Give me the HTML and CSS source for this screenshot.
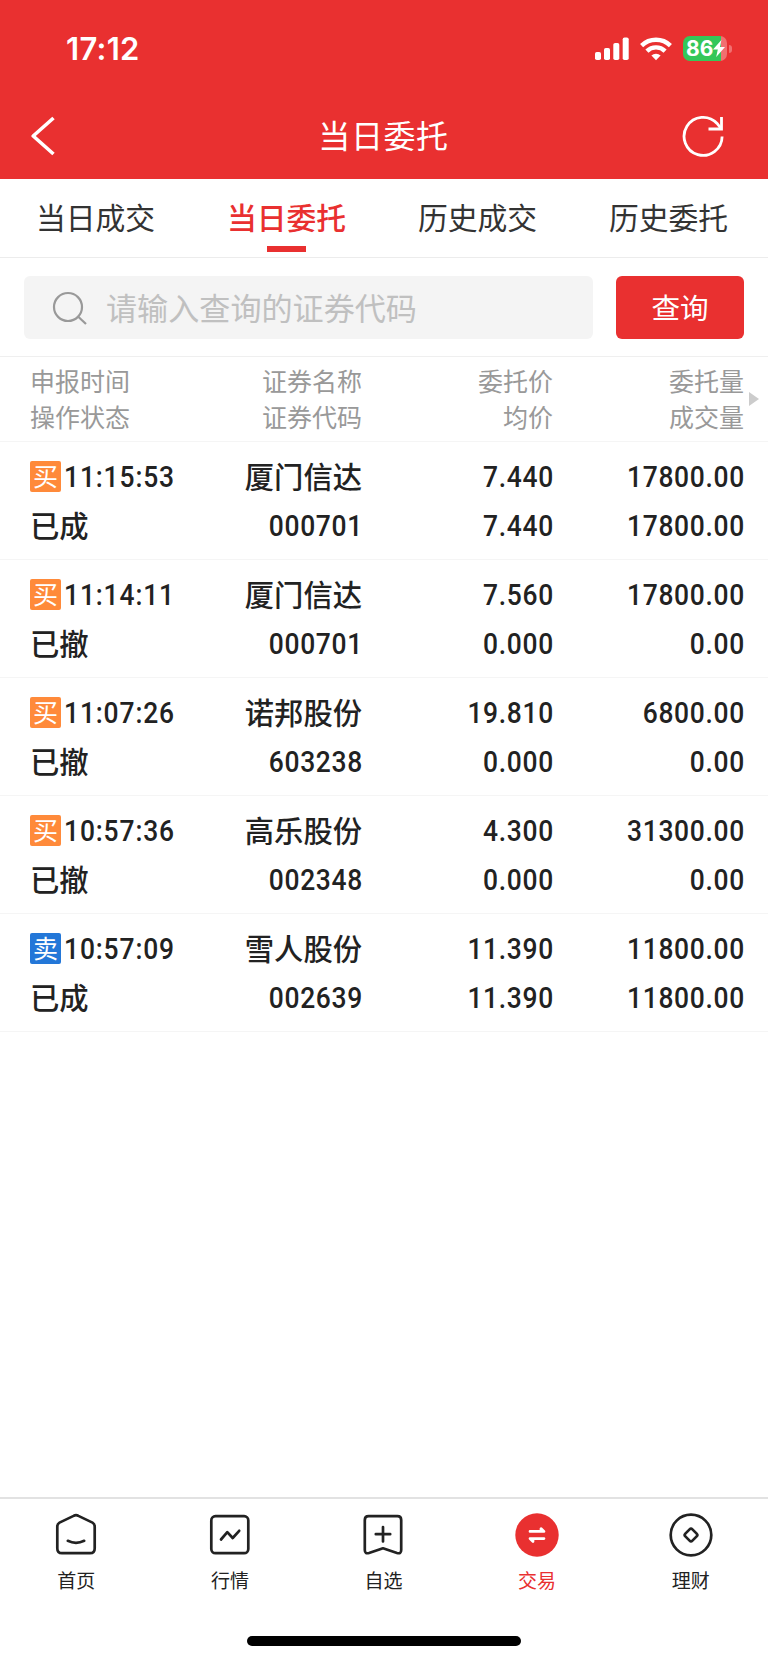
FILE: index.html
```html
<!DOCTYPE html>
<html lang="zh-CN">
<head>
<meta charset="utf-8">
<title>当日委托</title>
<link rel="stylesheet" href="styles.css">
</head>
<body>
<div class="page">
  <div class="header">
    <div class="status">
      <span class="clock">17:12</span>
      <div class="status-icons">
        <svg class="signal" width="34" height="24" viewBox="0 0 34 24" fill="#fff">
          <rect x="0" y="15" width="6" height="8" rx="1.8"/>
          <rect x="9" y="11" width="6" height="12" rx="1.8"/>
          <rect x="18.3" y="6" width="6" height="17" rx="1.8"/>
          <rect x="27.7" y="0.5" width="6" height="22.5" rx="1.8"/>
        </svg>
        <svg class="wifi" width="32" height="24" viewBox="0 0 32 24">
          <g fill="none" stroke="#fff" stroke-width="4.4">
            <path d="M1.6 8.6 A20.6 20.6 0 0 1 30.4 8.6"/>
            <path d="M6.9 14.1 A13 13 0 0 1 25.1 14.1"/>
          </g>
          <path d="M11.4 18.6 A6.6 6.6 0 0 1 20.6 18.6 L16 23.2 Z" fill="#fff"/>
        </svg>
        <div class="battery">
          <span>86</span>
          <svg width="12" height="17" viewBox="0 0 12 17" fill="#fff"><path d="M8.4 0 L0 9.6 H4.8 L3.2 17 L12 7 H7 Z"/></svg>
        </div>
        <div class="battery-cap"></div>
      </div>
    </div>
    <div class="nav">
      <svg width="24" height="40" viewBox="0 0 24 40" fill="none" stroke="#fff" stroke-width="3.6"><path d="M22.5 2 L2.2 20 L22.5 38" stroke-linejoin="round"/></svg>
      <h1>当日委托</h1>
      <svg width="42" height="42" viewBox="0 0 42 42" fill="none" stroke="#fff" stroke-width="2.8">
        <path d="M40.1 21.5 A19 19 0 1 1 35.1 8.5 L38.6 13"/>
        <path d="M39.5 2 V14 H26.5"/>
      </svg>
    </div>
  </div>

  <div class="tabs">
    <div class="tab">当日成交</div>
    <div class="tab active">当日委托</div>
    <div class="tab">历史成交</div>
    <div class="tab">历史委托</div>
  </div>

  <div class="search">
    <div class="search-box">
      <svg width="36" height="36" viewBox="0 0 36 36" fill="none" stroke="#999" stroke-width="2.2"><circle cx="16" cy="17" r="14"/><path d="M26 26.5 L34 34"/></svg>
      <span>请输入查询的证券代码</span>
    </div>
    <button class="search-btn">查询</button>
  </div>

  <div class="row thead">
    <div><p>申报时间</p><p>操作状态</p></div>
    <div><p>证券名称</p><p>证券代码</p></div>
    <div><p>委托价</p><p>均价</p></div>
    <div><p>委托量</p><p>成交量</p></div>
    <i class="more"></i>
  </div>

  <div class="row">
    <div><p><b class="tag buy">买</b><span class="num">11:15:53</span></p><p>已成</p></div>
    <div><p>厦门信达</p><p class="num">000701</p></div>
    <div><p class="num">7.440</p><p class="num">7.440</p></div>
    <div><p class="num">17800.00</p><p class="num">17800.00</p></div>
  </div>
  <div class="row">
    <div><p><b class="tag buy">买</b><span class="num">11:14:11</span></p><p>已撤</p></div>
    <div><p>厦门信达</p><p class="num">000701</p></div>
    <div><p class="num">7.560</p><p class="num">0.000</p></div>
    <div><p class="num">17800.00</p><p class="num">0.00</p></div>
  </div>
  <div class="row">
    <div><p><b class="tag buy">买</b><span class="num">11:07:26</span></p><p>已撤</p></div>
    <div><p>诺邦股份</p><p class="num">603238</p></div>
    <div><p class="num">19.810</p><p class="num">0.000</p></div>
    <div><p class="num">6800.00</p><p class="num">0.00</p></div>
  </div>
  <div class="row">
    <div><p><b class="tag buy">买</b><span class="num">10:57:36</span></p><p>已撤</p></div>
    <div><p>高乐股份</p><p class="num">002348</p></div>
    <div><p class="num">4.300</p><p class="num">0.000</p></div>
    <div><p class="num">31300.00</p><p class="num">0.00</p></div>
  </div>
  <div class="row">
    <div><p><b class="tag sell">卖</b><span class="num">10:57:09</span></p><p>已成</p></div>
    <div><p>雪人股份</p><p class="num">002639</p></div>
    <div><p class="num">11.390</p><p class="num">11.390</p></div>
    <div><p class="num">11800.00</p><p class="num">11800.00</p></div>
  </div>

  <div class="tabbar">
    <div class="item">
      <svg width="46" height="46" viewBox="0 0 46 46"><path d="M20.6 3.9 Q23 2.2 25.4 3.9 L39.5 10.6 Q41.7 11.8 41.7 14.4 V36.5 Q41.7 41.2 37 41.2 H9 Q4.3 41.2 4.3 36.5 V14.4 Q4.3 11.8 6.5 10.6 Z"/><path d="M14.8 28.8 Q23 32.8 31.2 28.8"/></svg>
      <span>首页</span>
    </div>
    <div class="item">
      <svg width="46" height="46" viewBox="0 0 46 46"><rect x="4.3" y="4.2" width="37" height="37" rx="4.2"/><path d="M14 27.5 L20.3 20.2 L25.7 26 L32.2 18.8"/></svg>
      <span>行情</span>
    </div>
    <div class="item">
      <svg width="46" height="46" viewBox="0 0 46 46"><path d="M8.6 4.2 H37.4 Q41.2 4.2 41.2 8 V38 Q41.2 42.2 37 41 L23 36.3 L9 41 Q4.8 42.2 4.8 38 V8 Q4.8 4.2 8.6 4.2 Z"/><path d="M23 15 V29.4 M15.8 22.2 H30.2"/></svg>
      <span>自选</span>
    </div>
    <div class="item on">
      <svg width="46" height="46" viewBox="0 0 46 46"><circle class="fill" cx="23" cy="23" r="21.7"/><path class="white" d="M16 19.4 H30 L27 16.6 V19 M30 26.6 H16 L19 29.6 V27"/></svg>
      <span>交易</span>
    </div>
    <div class="item">
      <svg width="46" height="46" viewBox="0 0 46 46"><circle cx="23" cy="23" r="20.3"/><rect x="18" y="18" width="10" height="10" rx="2" transform="rotate(45 23 23)"/></svg>
      <span>理财</span>
    </div>
  </div>
  <div class="home-bar"></div>
</div>
</body>
</html>
```

FILE: styles.css
```css
body {
  margin: 0;
  background: #fff;
  color: #222;
  font-family: "Noto Sans CJK SC", sans-serif;
}

p, h1 {
  margin: 0;
}

svg {
  display: block;
}

.page {
  display: flex;
  flex-direction: column;
  width: 768px;
  height: 1663px;
}

.header {
  height: 179px;
  background: #e93030;
  color: #fff;
}

.status {
  display: flex;
  justify-content: space-between;
  align-items: center;
  height: 97px;
  padding: 0 36px 0 66px;
}

.clock {
  font: 600 31px/36px Inter, sans-serif;
  letter-spacing: 0.3px;
  padding-top: 1px;
}

.status-icons {
  display: flex;
  align-items: center;
}

.wifi {
  margin: 0 11px 0 11px;
}

.battery {
  display: flex;
  align-items: center;
  width: 44px;
  height: 25px;
  padding-left: 3px;
  box-sizing: border-box;
  border-radius: 7px;
  background: linear-gradient(90deg, #34c759 86%, #f17070 86%);
  font: 700 21px/25px Inter, sans-serif;
}

.battery-cap {
  width: 3px;
  height: 8px;
  margin-left: 2px;
  border-radius: 0 4px 4px 0;
  background: #f17070;
}

.nav {
  display: grid;
  grid-template-columns: 42px 1fr 42px;
  align-items: center;
  height: 78px;
  padding: 0 44px 0 31px;
}

.nav h1 {
  padding: 0 0 4px 12px;
  font-size: 32px;
  font-weight: 400;
  line-height: 48px;
  letter-spacing: 0.6px;
  text-align: center;
}

.tabs {
  display: flex;
  height: 79px;
  border-bottom: 1px solid #ececec;
  box-sizing: border-box;
}

.tab {
  display: flex;
  flex-direction: column;
  align-items: center;
  width: 191px;
  padding-top: 15px;
  font-size: 29.8px;
  line-height: 44px;
  color: #333;
}

.tab.active {
  color: #e93030;
  font-weight: 500;
}

.tab.active::after {
  content: "";
  width: 39px;
  height: 6px;
  margin-top: 8px;
  background: #e93030;
}

.search {
  display: flex;
  justify-content: space-between;
  height: 63px;
  padding: 18px 24px 17px;
}

.search-box {
  display: flex;
  align-items: center;
  width: 569px;
  padding-left: 28px;
  box-sizing: border-box;
  border-radius: 6px;
  background: #f4f4f4;
  color: #c0c0c0;
  font-size: 31.1px;
}

.search-box span {
  margin-left: 18px;
  padding-bottom: 3px;
}

.search-btn {
  width: 128px;
  padding: 0 0 2px;
  border: none;
  border-radius: 6px;
  background: #e93030;
  color: #fff;
  font-family: inherit;
  font-size: 28.6px;
}

.row {
  display: grid;
  grid-template-columns: 170px 162px 191px 191px;
  height: 118px;
  padding: 0 24px 0 30px;
  box-sizing: border-box;
  border-bottom: 1px solid #f5f5f5;
  font-size: 29.3px;
  font-weight: 500;
  line-height: 45px;
}

.row > div {
  padding-top: 11px;
  text-align: right;
}

.row > div:first-child {
  text-align: left;
}

.row p {
  height: 49px;
  white-space: nowrap;
}

.row .num {
  margin-right: -1px;
  font-family: Roboto, sans-serif;
  font-size: 30px;
  letter-spacing: 0.8px;
  line-height: 48px;
  transform: scaleX(0.88);
  transform-origin: right;
}

.row span.num {
  display: inline-block;
  margin-left: 3px;
  letter-spacing: 1px;
  transform-origin: left;
}

.row div:first-child > p:first-child {
  display: flex;
  align-items: center;
  height: 48px;
  padding-bottom: 1px;
}

.tag {
  width: 31px;
  height: 31px;
  margin-bottom: 2px;
  border-radius: 2px;
  color: #fff;
  font-size: 25px;
  font-weight: 400;
  line-height: 29px;
  text-align: center;
}

.buy {
  background: #ff8a3a;
}

.sell {
  background: #2377d8;
}

.thead {
  position: relative;
  height: 86px;
  border-top: 1px solid #efefef;
  color: #999;
  font-size: 25px;
  font-weight: 400;
  line-height: 36px;
}

.thead > div {
  padding-top: 5px;
}

.thead div:first-child > p:first-child,
.thead p {
  height: 36px;
  padding: 0;
}

.more {
  position: absolute;
  right: 9px;
  top: 35px;
  border-left: 10px solid #ccc;
  border-top: 7px solid transparent;
  border-bottom: 7px solid transparent;
}

.tabbar {
  display: flex;
  height: 138px;
  margin-top: auto;
  border-top: 2px solid #e2e2e2;
  box-sizing: border-box;
}

.item {
  display: flex;
  flex: 1;
  flex-direction: column;
  align-items: center;
  padding-top: 13px;
  padding-right: 1px;
  font-size: 19px;
  line-height: 28px;
}

.item span {
  margin-top: 8px;
}

.item svg {
  fill: none;
  stroke: #222;
  stroke-width: 2.7;
  stroke-linecap: round;
  stroke-linejoin: round;
}

.item.on {
  color: #e93030;
}

.item .fill {
  fill: #e93030;
  stroke: none;
}

.item .white {
  stroke: #fff;
}

.home-bar {
  width: 274px;
  height: 10px;
  margin: 1px auto 17px;
  border-radius: 5px;
  background: #000;
}
```
